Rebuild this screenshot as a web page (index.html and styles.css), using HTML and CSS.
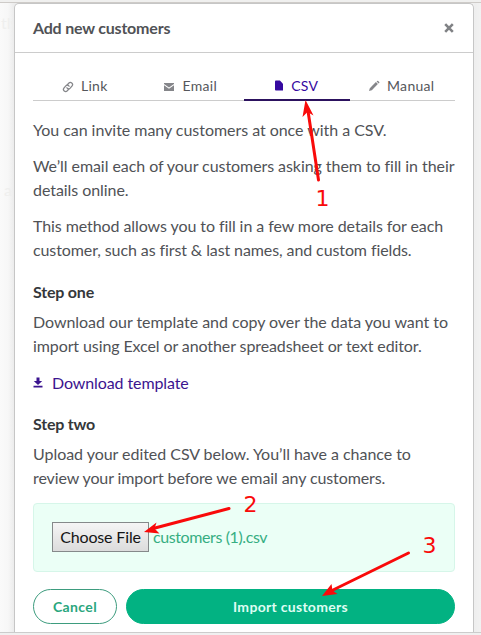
FILE: index.html
```html
<!DOCTYPE html>
<html lang="en">
<head>
<meta charset="utf-8">
<title>Add new customers</title>
<link rel="stylesheet" href="styles.css">
</head>
<body>
<div class="page">
  <span class="ghost ghost-top">tly</span>
  <span class="ghost ghost-mid">a</span>
  <main class="modal">
    <header class="modal-header">
      <h1 class="title">Add new customers</h1>
      <svg class="close" viewBox="0 0 10 10"><path d="M1.2 1.2 8.8 8.8M8.8 1.2 1.2 8.8"/></svg>
    </header>
    <div class="content">
      <nav class="tabs">
        <a class="tab tab-link"><svg class="icon" viewBox="0 0 12 12"><g fill="none" stroke="currentColor" stroke-width="1.3" stroke-linecap="round"><path d="M5 4.1 6.7 2.2c2-1.9 5 .4 3.4 2.7L8.2 7.1C7.2 8.2 5.500 8 4.900 6.800"/><path d="M7 7.900 5.300 9.800c-2 1.900-5-.4-3.400-2.700L3.800 4.900C4.800 3.800 6.500 4 7.100 5.200"/></g></svg><span>Link</span></a>
        <a class="tab tab-email"><svg class="icon" viewBox="0 0 12 12"><path fill="currentColor" d="M1 2h10v.9L6 6.4 1 2.900zM1 4.200l5 3.500 5-3.500V10H1z"/></svg><span>Email</span></a>
        <a class="tab tab-csv active"><svg class="icon icon-file" viewBox="0 0 9 12"><path fill="currentColor" d="M1 .5h4.500L9 4v7.500H1q-1 0-1-1v-9q0-1 1-1z"/></svg><span>CSV</span></a>
        <a class="tab tab-manual"><svg class="icon" viewBox="0 0 12 12"><path fill="currentColor" d="M1 11l.8-2.800 6.100-6.100 2 2-6.100 6.100zM8.600 1.500l.6-.6q.5-.5 1 0l1 1q.5.5 0 1l-.6.6z"/></svg><span>Manual</span></a>
      </nav>
      <p class="l1">You can invite many customers at once with a CSV.</p>
      <p><span class="l2">We’ll email each of your customers asking them to fill in their</span><br><span class="l3">details online.</span></p>
      <p><span class="l4">This method allows you to fill in a few more details for each</span><br><span class="l5">customer, such as first &amp; last names, and custom fields.</span></p>
      <h2>Step one</h2>
      <p><span class="l6">Download our template and copy over the data you want to</span><br><span class="l7">import using Excel or another spreadsheet or text editor.</span></p>
      <a class="download"><svg class="icon-download" viewBox="0 0 10 11"><path fill="currentColor" d="M3.500.5h3v3.400h2.700L5 8 .8 3.900h2.700zM.5 8.800h9v1.600h-9z"/></svg><span>Download template</span></a>
      <h2>Step two</h2>
      <p><span class="l8">Upload your edited CSV below. You’ll have a chance to</span><br><span class="l9">review your import before we email any customers.</span></p>
      <div class="upload"><button class="choose">Choose File</button><span class="filename">customers (1).csv</span></div>
      <div class="actions">
        <button class="btn cancel">Cancel</button>
        <button class="btn primary">Import customers</button>
      </div>
    </div>
  </main>
  <svg class="notes" viewBox="0 0 481 635">
    <g stroke="#f90a0a" stroke-width="3" stroke-linecap="round">
      <path d="M318.500 180 308 111"/><path d="M229 508.500 155 528"/><path d="M408.500 553 333 590"/>
    </g>
    <g fill="#f90a0a">
      <path d="M305.500 100 313.500 115.500 307.500 112 302.500 117z"/>
      <path d="M144 532 156.500 522.500 154.500 528.500 159.500 533.500z"/>
      <path d="M322 596 331.500 584 332.500 590.500 337.500 594z"/>
      <text x="315.500" y="206">1</text><text x="243.500" y="512">2</text><text x="422.500" y="553">3</text>
    </g>
  </svg>
</div>
</body>
</html>
```
FILE: styles.css
```css
* { box-sizing: border-box; }
body { margin: 0; font-family: Lato, "Liberation Sans", sans-serif; color: #505256; }
.page {
  position: relative; width: 481px; height: 635px; overflow: hidden;
  padding: 3px 8px 0 14px;
  background: linear-gradient(#f0f0ef 0 2px, #cecbc8 2px 3px, transparent 3px 632px, #ccc 632px 633px, #f0f0f0 633px), linear-gradient(90deg, #fafafa 0, #f7f7f7 8px, #ececec 14px, #f1f1f1 473px, #eee 475px, #f2f2f2 481px);
}
.ghost { position: absolute; font-size: 16px; color: #efefee; }
.ghost-top { left: 1px; top: 13px; }
.ghost-mid { left: 4px; top: 180px; }
.modal {
  position: relative; width: 460px; height: 629px; background: #fff;
  border: 1px solid #c6c6c6; border-bottom: 0; border-radius: 5px 5px 0 0;
}
.modal-header {
  display: flex; align-items: center; justify-content: space-between;
  height: 49px; padding: 0 19px 0 18px; border-bottom: 1px solid #ccc;
}
.title { margin: 0; padding-bottom: 2px; font-size: 16px; font-weight: 700; letter-spacing: -.2px; color: #505256; }
.close { width: 10px; height: 10px; fill: none; stroke: #808285; stroke-width: 2.6; }
.content { padding: 18px 18px 0; }
.tabs { display: grid; grid-template-columns: repeat(4, 1fr); height: 30px; margin-bottom: 17px; border-bottom: 1px solid #ccc; }
.tab { display: flex; align-items: center; justify-content: center; gap: 7px; height: 30px; padding-bottom: 1px; font-size: 14px; letter-spacing: .3px; color: #55575b; }
.tab-link, .tab-email, .tab-manual { padding-right: 2px; }
.tab-csv { gap: 8px; }
.active { padding-bottom: 0; color: #3509a0; border-bottom: 2px solid #2c125f; }
.icon { width: 12px; height: 12px; color: #85868a; }
.tab-link .icon, .tab-email .icon { position: relative; top: 1px; }
.active .icon { color: #3509a0; }
.icon-file { width: 8px; height: 11px; }
p { margin: 0 0 12px; font-size: 16px; line-height: 24px; white-space: nowrap; }
.l1 { letter-spacing: -.04px; }
.l2, .l3 { letter-spacing: -.065px; }
.l4 { letter-spacing: -.08px; }
.l5, .l7, .l9 { letter-spacing: -.1px; }
.l6, .l8 { letter-spacing: -.04px; }
h2 { margin: 18px 0 6px; font-size: 16px; line-height: 24px; font-weight: 700; letter-spacing: -.2px; color: #35373a; }
.download { display: flex; align-items: center; gap: 9px; height: 24px; font-size: 16px; letter-spacing: -.1px; color: #3b148f; }
.icon-download { width: 10px; height: 11px; }
.upload { display: flex; align-items: center; gap: 4px; height: 69px; margin-top: 13px; padding: 0 18px 2px; background: #ebfff6; border: 1px solid #d6f6e9; border-radius: 4px; color: #36ae82; font-size: 16px; }
.filename { letter-spacing: -.4px; }
.choose { width: 97px; height: 30px; padding: 0 0 1px; border: 1px solid #85898a; border-radius: 0; background: linear-gradient(#f5f5f5, #dcdcdc); font: 16px Lato, sans-serif; letter-spacing: -.15px; color: #151515; white-space: nowrap; }
.actions { display: flex; gap: 9px; margin-top: 17px; }
.btn { height: 35px; padding: 0 0 1px; border: 1px solid #02b282; border-radius: 18px; font: 700 14px Lato, sans-serif; letter-spacing: .4px; }
.cancel { width: 84px; background: #fff; border-color: #3d9c7e; color: #2aa67d; }
.primary { flex: 1; background: #02b282; color: #dffdf2; letter-spacing: .3px; }
.notes { position: absolute; left: 0; top: 0; width: 481px; height: 635px; pointer-events: none; }
.notes text { font: 22px "DejaVu Sans", sans-serif; }
```
